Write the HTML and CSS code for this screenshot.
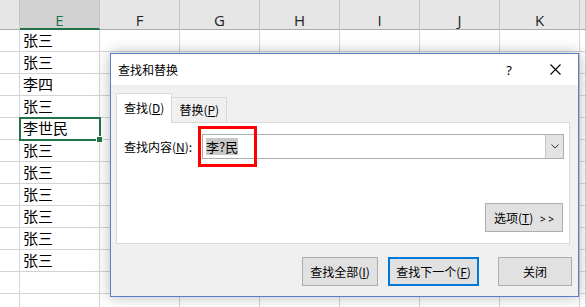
FILE: index.html
```html
<!DOCTYPE html>
<html lang="zh-CN">
<head>
    <meta charset="UTF-8">
    <title>查找和替换</title>
    <link rel="stylesheet" href="styles.css">
</head>
<body>
    <div class="sheet">
        <div class="col-heads">
            <div class="head"></div>
            <div class="head sel">E</div>
            <div class="head">F</div>
            <div class="head">G</div>
            <div class="head">H</div>
            <div class="head">I</div>
            <div class="head">J</div>
            <div class="head">K</div>
            <div class="head"></div>
        </div>
        <div class="grid" id="grid"></div>
    </div>

    <div class="dialog">
        <div class="titlebar">
            <span class="title">查找和替换</span>
            <span class="tb-btn">?</span>
            <span class="tb-btn">
                <svg width="11" height="11" viewBox="0 0 11 11"><path d="M0.5 0.5L10.5 10.5M10.5 0.5L0.5 10.5" stroke="#000" stroke-width="1.1"/></svg>
            </span>
        </div>
        <div class="dlg-body">
            <div class="tabs">
                <div class="tab active">查找(<u>D</u>)</div>
                <div class="tab">替换(<u>P</u>)</div>
            </div>
            <div class="panel">
                <div class="find-row">
                    <label class="find-label">查找内容(<u>N</u>):</label>
                    <div class="combo">
                        <span class="combo-text"><span class="picked">李?民</span></span>
                        <span class="combo-drop">
                            <svg width="8" height="5" viewBox="0 0 8 5"><path d="M0.5 0.5L4 4L7.5 0.5" fill="none" stroke="#333" stroke-width="1"/></svg>
                        </span>
                    </div>
                    <div class="mark"></div>
                </div>
                <div class="opt-row">
                    <button class="btn opt">选项(<u>T</u>) <span class="more">&gt; &gt;</span></button>
                </div>
            </div>
            <div class="actions">
                <button class="btn all">查找全部(<u>I</u>)</button>
                <button class="btn next">查找下一个(<u>F</u>)</button>
                <button class="btn close">关闭</button>
            </div>
        </div>
    </div>

    <script>
        // E 列的数据，第 5 行是当前选中的单元格
        const names = ['张三', '张三', '李四', '张三', '李世民', '张三', '张三', '张三', '张三', '张三', '张三', '', ''];
        const grid = document.getElementById('grid');

        names.forEach(function (name, row) {
            for (let col = 0; col < 9; col++) {
                const cell = document.createElement('div');
                cell.className = 'cell';
                if (col === 1) {
                    cell.textContent = name;
                    if (row === 4) cell.classList.add('active');
                }
                grid.appendChild(cell);
            }
        });
    </script>
</body>
</html>
```

FILE: styles.css
```css
body {
    margin: 0;
    width: 586px;
    height: 307px;
    overflow: hidden;
    position: relative;
    background: #fff;
    font-family: "Noto Sans CJK SC", sans-serif;
}
.sheet {
    width: 586px;
}
.col-heads,
.grid {
    display: grid;
    grid-template-columns: 20px repeat(7, 80px) 6px;
}
.head {
    height: 30px;
    box-sizing: border-box;
    background: #e6e6e6;
    border-right: 1px solid #c6c6c6;
    border-bottom: 1px solid #ababab;
    font-family: "Open Sans", "Noto Sans", sans-serif;
    font-size: 15px;
    line-height: 16px;
    padding-top: 12px;
    text-align: center;
    color: #222;
}
.head.sel {
    background: #d2d2d2;
    color: #217346;
    border-bottom: 2px solid #217346;
}
.grid {
    grid-auto-rows: 22px;
}
.cell {
    box-sizing: border-box;
    border-right: 1px solid #d4d4d4;
    border-bottom: 1px solid #d4d4d4;
    font-size: 15px;
    line-height: 20px;
    padding-left: 3px;
    color: #000;
    white-space: nowrap;
}
.cell.active {
    position: relative;
    outline: 2px solid #217346;
    outline-offset: -1px;
}
.cell.active::after {
    content: "";
    position: absolute;
    right: -4px;
    bottom: -4px;
    width: 5px;
    height: 5px;
    background: #217346;
    border: 1px solid #fff;
}

/* 对话框 */
.dialog {
    position: absolute;
    left: 110px;
    top: 53px;
    width: 469px;
    height: 244px;
    box-sizing: border-box;
    border: 1px solid #5a7fc6;
    background: #f0f0f0;
    box-shadow: 0 0 14px rgba(0, 0, 0, 0.28);
    font-size: 12px;
    color: #000;
    display: flex;
    flex-direction: column;
}
.titlebar {
    height: 31px;
    background: #fff;
    display: flex;
    align-items: center;
    padding-left: 7px;
}
.title {
    flex: 1;
    font-size: 12px;
}
.tb-btn {
    width: 46px;
    height: 31px;
    display: flex;
    align-items: center;
    justify-content: center;
    font-family: "Noto Sans", sans-serif;
    font-size: 13px;
}
.dlg-body {
    flex: 1;
    padding: 8px 8px 0 5px;
    display: flex;
    flex-direction: column;
}
.tabs {
    display: flex;
    align-items: flex-end;
    height: 29px;
}
.tab {
    height: 25px;
    box-sizing: border-box;
    padding: 0 7px;
    border: 1px solid #d9d9d9;
    border-left: none;
    border-bottom: none;
    line-height: 24px;
    background: #f0f0f0;
}
.tab.active {
    height: 30px;
    margin-bottom: -1px;
    border-left: 1px solid #d9d9d9;
    background: #fff;
    padding: 0 7px;
    line-height: 28px;
    position: relative;
    z-index: 1;
}
.panel {
    height: 122px;
    box-sizing: border-box;
    background: #fff;
    border: 1px solid #d9d9d9;
    padding: 11px 5px 11px 7px;
    display: flex;
    flex-direction: column;
}
.find-row {
    display: flex;
    align-items: center;
    position: relative;
}
.find-label {
    width: 78px;
}
.combo {
    flex: 1;
    height: 25px;
    box-sizing: border-box;
    border: 1px solid #adadad;
    display: flex;
    align-items: stretch;
}
.combo-text {
    flex: 1;
    padding-left: 3px;
    display: flex;
    align-items: center;
    font-size: 13px;
}
.picked {
    background: #c8c8c8;
    line-height: 17px;
}
.combo-drop {
    width: 17px;
    background: #e3e3e3;
    border-left: 1px solid #c4c4c4;
    display: flex;
    align-items: center;
    justify-content: center;
}
.mark {
    position: absolute;
    left: 74px;
    top: -8px;
    width: 59px;
    height: 41px;
    box-sizing: border-box;
    border: 3px solid #ff0000;
}
.opt-row {
    margin-top: auto;
    display: flex;
    justify-content: flex-end;
    padding-right: 1px;
}
.btn {
    font-family: "Noto Sans CJK SC", sans-serif;
    font-size: 12px;
    color: #000;
    height: 29px;
    box-sizing: border-box;
    background: #e1e1e1;
    border: 1px solid #adadad;
    padding: 0;
}
.opt {
    width: 78px;
}
.more {
    font-family: "Noto Sans", sans-serif;
    font-size: 10px;
    margin-left: 4px;
}
.actions {
    display: flex;
    justify-content: flex-end;
    margin-top: 13px;
    margin-right: -2px;
}
.all {
    width: 76px;
}
.next {
    width: 91px;
    margin-left: 10px;
    border: 2px solid #0078d7;
}
.close {
    width: 74px;
    margin-left: 19px;
}
```
